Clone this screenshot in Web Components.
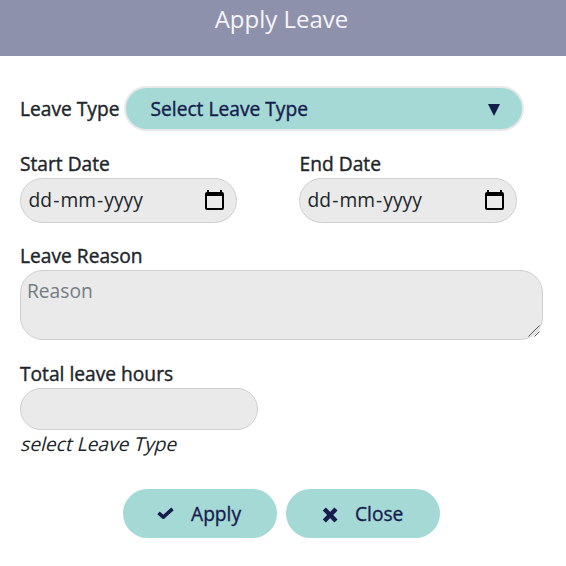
<!DOCTYPE html>
<html lang="en"><head><meta charset="utf-8"><title>Apply Leave</title>
<style>
html,body{margin:0;background:#fff}
body{font-family:"Open Sans","Noto Sans",sans-serif;font-size:19px;color:#212529;height:566px;overflow:hidden}
</style></head><body>
<leave-dialog></leave-dialog>
<script>
const define=(name,html)=>customElements.define(name,class extends HTMLElement{
  constructor(){super();this.attachShadow({mode:'open'}).innerHTML=html;}
});
define('dialog-header',`<style>:host{display:flex;justify-content:center;box-sizing:border-box;height:56px;padding-top:2px;background:#8e91ab;color:#f5f5f8;font-size:24px;line-height:33px}span{margin-right:3px}</style><span><slot></slot></span>`);
define('field-label',`<style>:host{display:block;height:24px;line-height:24px;font-size:19.2px;white-space:nowrap;-webkit-text-stroke:.4px currentColor}</style><slot></slot>`);
define('leave-select',`<style>:host{display:flex;align-items:center;justify-content:space-between;box-sizing:border-box;width:400px;height:45px;border:2px solid #e6e8e9;border-radius:23px;background:#a5d9d5;color:#171c4f;padding:0 22px 0 24.5px}
span{font-size:19.2px;line-height:24px;-webkit-text-stroke:.4px currentColor}svg{display:block;margin-top:3px}</style><span><slot></slot></span><svg width="12" height="12"><path d="M0 0H12L6 12Z" fill="currentColor"/></svg>`);
define('date-field',`<style>:host{display:flex;align-items:center;justify-content:space-between;box-sizing:border-box;width:var(--w,217px);height:45px;border:1px solid #cfcfcf;border-radius:23px;background:#eaeaea;padding:0 12px 0 6.5px;color:#212529}
.value{font-size:19.2px;line-height:26px;margin-top:-1px}.value span{padding:0 1.1px}svg{display:block;margin-top:-1px}</style><div class="value"><span>dd</span>-<span>mm</span>-<span>yyyy</span></div><svg width="19" height="20" fill="#000"><path fill-rule="evenodd" d="M2 2H17Q19 2 19 4V18Q19 20 17 20H2Q0 20 0 18V4Q0 2 2 2ZM2 6V18H17V6Z"/><path d="M2 0h2v3H2zM15 0h2v3h-2z"/></svg>`);
define('reason-field',`<style>:host{display:flex;position:relative;box-sizing:border-box;width:523px;height:70px;border:1px solid #cfcfcf;border-radius:23px;background:#eaeaea;padding:6px;color:#747d85;font-size:19.2px;line-height:27px}
svg{position:absolute;right:2px;bottom:2px}</style><slot></slot><svg width="12" height="12" fill="none" stroke="#444" stroke-width=".9"><path d="M.5 11.5L11.5 .5M6.5 11.5L11.5 6.5"/></svg>`);
define('hours-field',`<style>:host{display:block;box-sizing:border-box;width:238px;height:42px;border:1px solid #cfcfcf;border-radius:21px;background:#eaeaea}</style>`);
define('field-hint',`<style>:host{display:flex;height:28px;line-height:28px;font-size:19.2px}span{transform:skewX(-14deg);transform-origin:0 75%}</style><span><slot></slot></span>`);
define('pill-button',`<style>:host{display:flex;align-items:center;box-sizing:border-box;width:154px;height:49px;border-radius:25px;background:#a5d9d5;color:#171c4f;padding-left:34px;font-size:19.2px;line-height:25px;-webkit-text-stroke:.35px currentColor}
span{margin-left:var(--gap,17px)}::slotted(svg){display:block;-webkit-text-stroke:0;margin-top:var(--drop,0)}</style><slot name="icon"></slot><span><slot></slot></span>`);
define('leave-dialog',`<style>:host{display:block}main{display:flex;flex-direction:column;padding:30px 20px 0}
.type{display:flex;align-items:center;justify-content:space-between;width:504px;height:45px}
.dates{display:flex;gap:62px;margin-top:21px}.dates>div,.reason,.total{display:flex;flex-direction:column}
field-label{margin-bottom:2px}.type field-label{margin:0}.dates>div+div field-label{padding-left:.6px}
.reason{margin-top:21px}.total{margin-top:22px}.actions{display:flex;gap:9px;padding:31px 0 0 103px}</style>
<dialog-header>Apply Leave</dialog-header><main>
<div class="type"><field-label>Leave Type</field-label><leave-select>Select Leave Type</leave-select></div>
<div class="dates"><div><field-label>Start Date</field-label><date-field></date-field></div><div><field-label>End Date</field-label><date-field style="--w:218px"></date-field></div></div>
<div class="reason"><field-label>Leave Reason</field-label><reason-field>Reason</reason-field></div>
<div class="total"><field-label>Total leave hours</field-label><hours-field></hours-field><field-hint>select Leave Type</field-hint></div>
<div class="actions"><pill-button><svg slot="icon" width="17" height="13" fill="none" stroke="currentColor" stroke-width="3.6" stroke-linejoin="round"><path d="M1.5 5.8L6.3 10.2L15.5 1.8"/></svg>Apply</pill-button>
<pill-button style="--gap:16px;--drop:3px;padding-left:36px"><svg slot="icon" width="17" height="16" fill="none" stroke="currentColor" stroke-width="4.4"><path d="M2.3 2L14 14M14 2L2.3 14"/></svg>Close</pill-button></div>
</main>`);
</script></body></html>
